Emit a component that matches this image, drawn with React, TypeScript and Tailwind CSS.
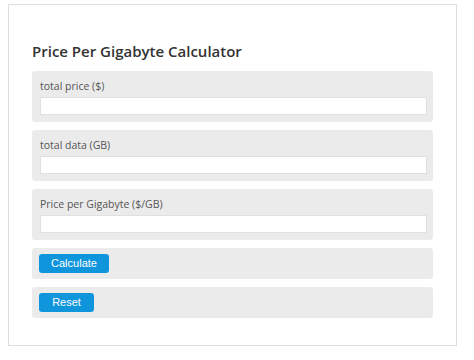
export default function App() {
  const fields = ["total price ($)", "total data (GB)", "Price per Gigabyte ($/GB)"];

  return (
    <div className="w-[474px] h-[360px] bg-white pt-[4px] pl-[8px]">
      <div className="w-[449px] h-[342px] border border-[#dedede] bg-white px-[23px] pt-[35px] font-['Open_Sans',sans-serif]">
        <h1 className="text-[15px] leading-[22px] font-semibold text-[#333] mb-[9px]">
          Price Per Gigabyte Calculator
        </h1>
        <div className="flex flex-col gap-[8px] w-[401px]">
          {fields.map((f) => (
            <div key={f} className="rounded-[3px] bg-[#ebebeb] pl-[8px] pr-[6px] pt-[7px] pb-[7px]">
              <div className="text-[10.5px] leading-[16px] text-[#555]">{f}</div>
              <input
                type="text"
                className="mt-[3px] block w-full h-[18px] bg-white border border-[#e0e0e0] outline-none"
              />
            </div>
          ))}
          <div className="rounded-[3px] bg-[#ebebeb] pl-[7px] py-[6px]">
            <button className="block w-[70px] h-[19px] rounded-[3px] bg-[#0f95dc] text-white text-[11px] leading-[19px] font-['Liberation_Sans',Arial,sans-serif]">
              Calculate
            </button>
          </div>
          <div className="rounded-[3px] bg-[#ebebeb] pl-[7px] py-[6px]">
            <button className="block w-[55px] h-[19px] rounded-[3px] bg-[#0f95dc] text-white text-[11px] leading-[19px] font-['Liberation_Sans',Arial,sans-serif]">
              Reset
            </button>
          </div>
        </div>
      </div>
    </div>
  );
}
